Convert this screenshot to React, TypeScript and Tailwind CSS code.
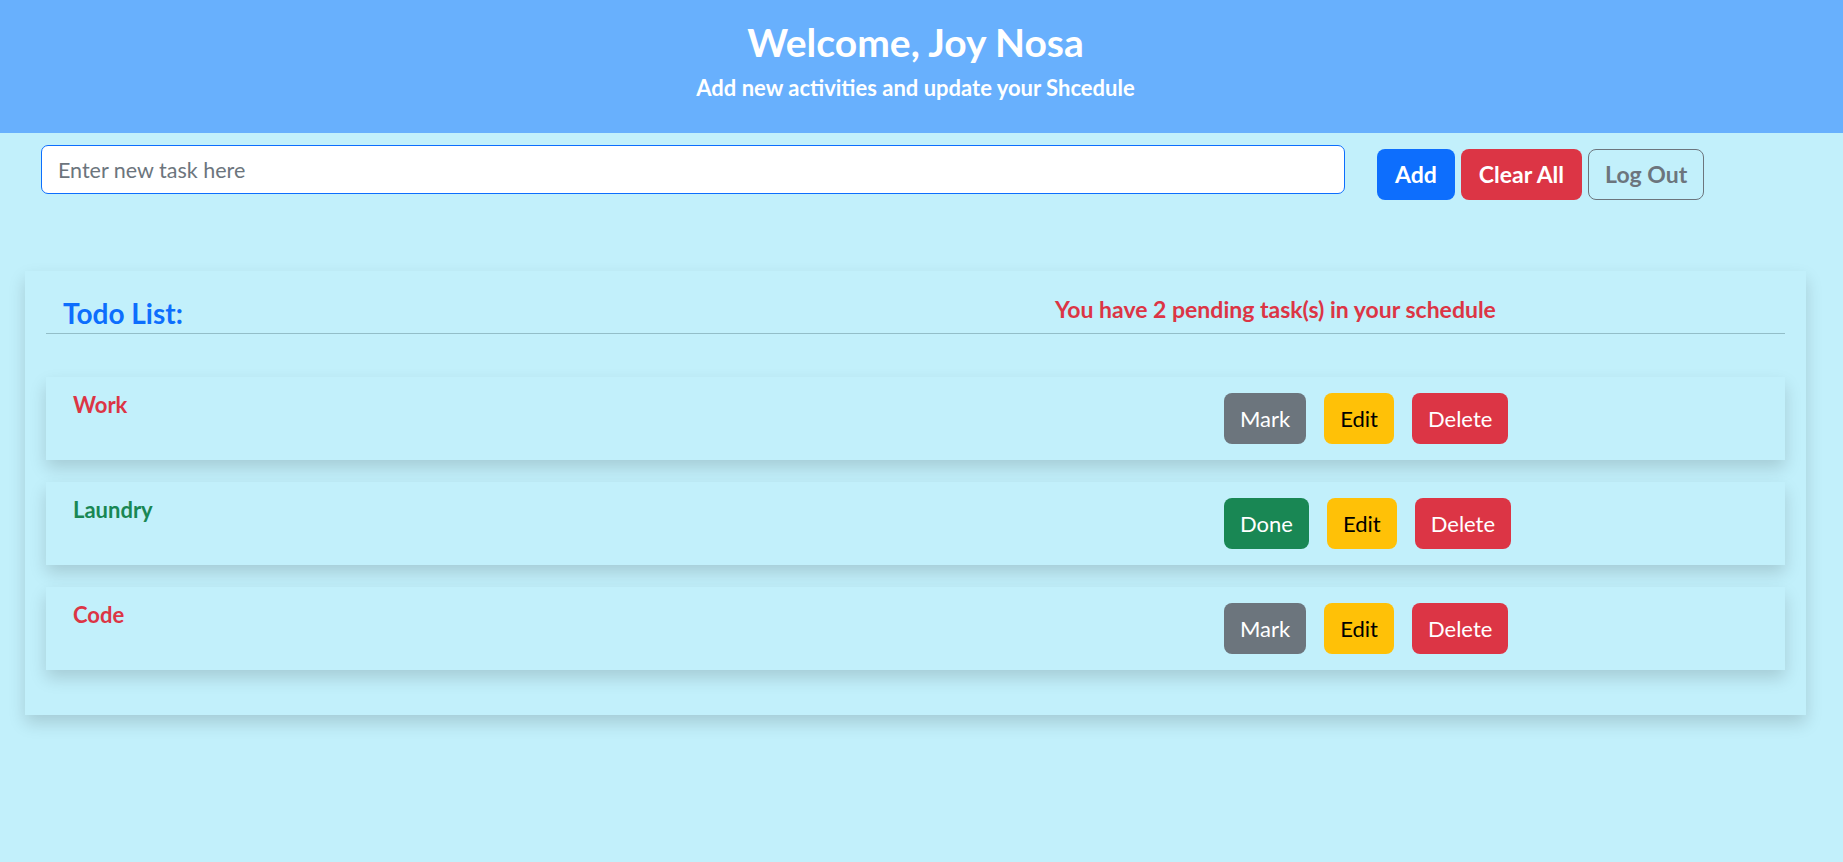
import React from "react";

const tasks = [
  { name: "Work", done: false },
  { name: "Laundry", done: true },
  { name: "Code", done: false },
];

export default function App() {
  return (
    <div
      className="min-h-screen bg-[#c2f0fb]"
      style={{ fontFamily: "Lato, 'Open Sans', sans-serif" }}
    >
      <header className="h-[133px] bg-[#68b0fd] flex flex-col items-center text-white pr-[12px]">
        <h1 className="mt-[18px] text-[39px] leading-[48px] font-bold">Welcome, Joy Nosa</h1>
        <h5 className="mt-[9px] text-[22px] leading-[26px] font-bold">
          Add new activities and update your Shcedule
        </h5>
      </header>

      <div className="flex items-start pl-[41px] mt-[12px]">
        <input
          className="w-[1304px] h-[49px] rounded-[7px] border border-[#0d6efd] bg-white px-[16px] text-[21.5px] text-[#212529] placeholder:text-[#6c757d] outline-none"
          placeholder="Enter new task here"
        />
        <div className="ml-[32px] mt-[4px] flex gap-[6px]">
          <button className="h-[51px] px-[18px] rounded-[8px] bg-[#0d6efd] text-white text-[23px] font-bold">
            Add
          </button>
          <button className="h-[51px] px-[18px] rounded-[8px] bg-[#dc3545] text-white text-[23px] font-bold">
            Clear All
          </button>
          <button className="h-[51px] px-[16px] rounded-[8px] border border-[#6c757d] text-[#6c757d] text-[23px] font-bold">
            Log Out
          </button>
        </div>
      </div>

      <section className="ml-[25px] mt-[71px] w-[1781px] h-[444px] bg-[#c2f0fb] shadow-[0_8px_16px_rgba(0,0,0,0.15)] px-[21px] pt-[27px]">
        <div className="flex items-end h-[36px] border-b border-[#93bec8]">
          <h4 className="pl-[17px] w-[1009px] text-[28px] leading-[34px] font-bold text-[#0d6efd] mb-[3px]">
            Todo List:
          </h4>
          <p className="text-[23px] leading-[32px] font-bold text-[#dc3545] mb-[8px]">
            You have 2 pending task(s) in your schedule
          </p>
        </div>

        <div className="mt-[43px] flex flex-col gap-[22px]">
          {tasks.map((t) => (
            <div
              key={t.name}
              className="h-[83px] flex items-start shadow-[0_8px_16px_rgba(0,0,0,0.15)] bg-[#c2f0fb]"
            >
              <div className="flex-1 pl-[27px] pt-[14px]">
                <span
                  className={
                    "text-[22px] leading-[28px] font-bold " +
                    (t.done ? "text-[#198754]" : "text-[#dc3545]")
                  }
                >
                  {t.name}
                </span>
              </div>
              <div className="w-[561px] pt-[16px] flex gap-[18px]">
                {t.done ? (
                  <button className="h-[51px] px-[16px] rounded-[8px] bg-[#198754] text-white text-[22px]">
                    Done
                  </button>
                ) : (
                  <button className="h-[51px] px-[16px] rounded-[8px] bg-[#6c757d] text-white text-[22px]">
                    Mark
                  </button>
                )}
                <button className="h-[51px] px-[16px] rounded-[8px] bg-[#ffc107] text-black text-[22px]">
                  Edit
                </button>
                <button className="h-[51px] px-[16px] rounded-[8px] bg-[#dc3545] text-white text-[22px]">
                  Delete
                </button>
              </div>
            </div>
          ))}
        </div>
      </section>
    </div>
  );
}
